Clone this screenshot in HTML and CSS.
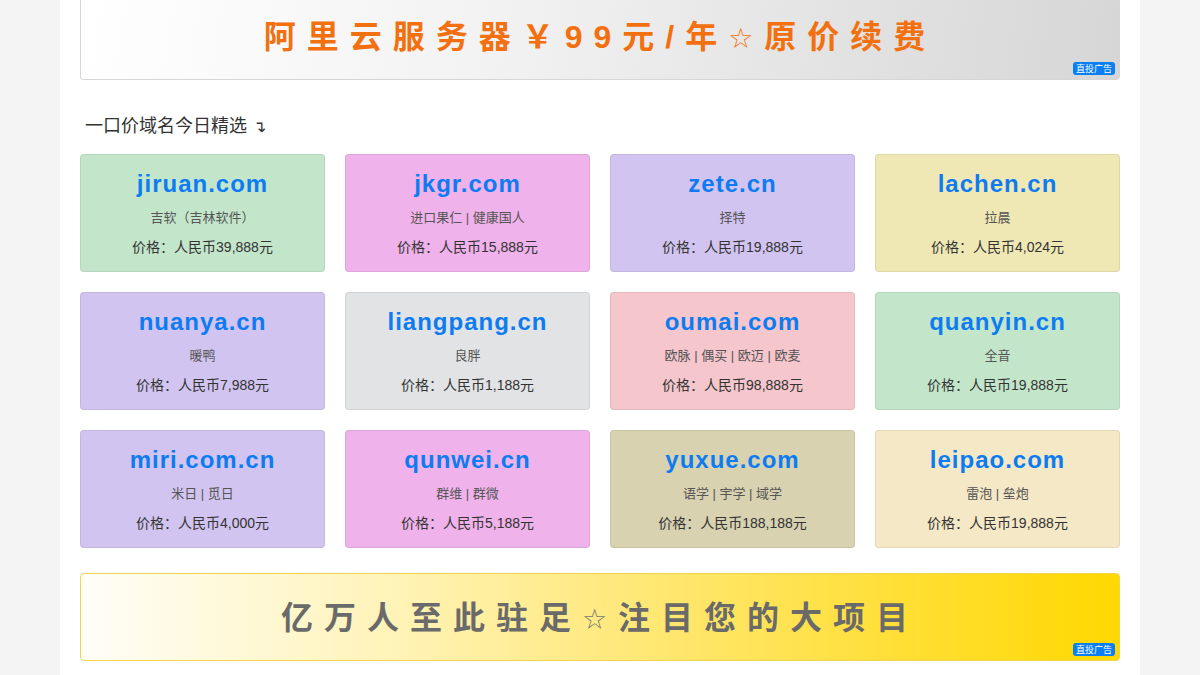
FILE: index.html
```html
<!DOCTYPE html>
<html lang="zh-CN">
<head>
<meta charset="utf-8">
<title>一口价域名今日精选</title>
<link rel="stylesheet" href="styles.css">
</head>
<body>
<div class="page">
  <div class="banner banner-top">
    <span class="banner-text">阿里云服务器￥99元/年<span class="star">☆</span>原价续费</span>
    <span class="badge">直投广告</span>
  </div>

  <h2 class="section-title">一口价域名今日精选 <span class="arrow">↴</span></h2>

  <div class="grid">
    <div class="card c-green"><div class="domain">jiruan.com</div><div class="sub">吉软（吉林软件）</div><div class="price">价格：人民币39,888元</div></div>
    <div class="card c-pink"><div class="domain">jkgr.com</div><div class="sub">进口果仁 | 健康国人</div><div class="price">价格：人民币15,888元</div></div>
    <div class="card c-lav"><div class="domain">zete.cn</div><div class="sub">择特</div><div class="price">价格：人民币19,888元</div></div>
    <div class="card c-yellow"><div class="domain">lachen.cn</div><div class="sub">拉晨</div><div class="price">价格：人民币4,024元</div></div>

    <div class="card c-lav"><div class="domain">nuanya.cn</div><div class="sub">暖鸭</div><div class="price">价格：人民币7,988元</div></div>
    <div class="card c-gray"><div class="domain">liangpang.cn</div><div class="sub">良胖</div><div class="price">价格：人民币1,188元</div></div>
    <div class="card c-rose"><div class="domain">oumai.com</div><div class="sub">欧脉 | 偶买 | 欧迈 | 欧麦</div><div class="price">价格：人民币98,888元</div></div>
    <div class="card c-green"><div class="domain">quanyin.cn</div><div class="sub">全音</div><div class="price">价格：人民币19,888元</div></div>

    <div class="card c-lav"><div class="domain">miri.com.cn</div><div class="sub">米日 | 觅日</div><div class="price">价格：人民币4,000元</div></div>
    <div class="card c-pink"><div class="domain">qunwei.cn</div><div class="sub">群维 | 群微</div><div class="price">价格：人民币5,188元</div></div>
    <div class="card c-khaki"><div class="domain">yuxue.com</div><div class="sub">语学 | 宇学 | 域学</div><div class="price">价格：人民币188,188元</div></div>
    <div class="card c-cream"><div class="domain">leipao.com</div><div class="sub">雷泡 | 垒炮</div><div class="price">价格：人民币19,888元</div></div>
  </div>

  <div class="banner banner-bottom">
    <span class="banner-text">亿万人至此驻足<span class="star">☆</span>注目您的大项目</span>
    <span class="badge">直投广告</span>
  </div>
</div>
</body>
</html>
```

FILE: styles.css
```css
html, body {
  margin: 0;
  padding: 0;
}
body {
  background: #f4f4f4;
  font-family: "Liberation Sans", "Noto Sans CJK SC", sans-serif;
  color: #333;
}
.page {
  width: 1040px;
  margin: 0 auto;
  padding: 0 20px 20px;
  background: #fff;
  min-height: 675px;
}
.banner {
  position: relative;
  display: flex;
  justify-content: center;
  align-items: center;
  box-sizing: border-box;
  border-radius: 0 0 4px 4px;
}
.banner-top {
  height: 80px;
  border: 1px solid #d6d6d6;
  border-top: 0;
  padding-bottom: 12px;
  background: linear-gradient(100deg, #ffffff 0%, #f2f2f2 40%, #d6d6d6 100%);
}
.banner-top .banner-text {
  color: #f2700f;
  font-weight: bold;
  font-size: 32px;
  letter-spacing: 11px;
  white-space: nowrap;
}
.star {
  font-weight: normal;
  font-family: "DejaVu Sans", sans-serif;
  font-size: 28px;
}
.banner-bottom {
  margin-top: 25px;
  height: 88px;
  border: 1px solid #f0d54a;
  border-radius: 4px;
  padding-bottom: 5px;
  background: linear-gradient(90deg, #fffef8 0%, #fff3b8 30%, #ffe566 60%, #ffd800 100%);
}
.banner-bottom .banner-text {
  color: #6a6a6a;
  font-weight: bold;
  font-size: 32px;
  letter-spacing: 11px;
  white-space: nowrap;
}
.banner-bottom .star {
  color: #777;
}
.badge {
  position: absolute;
  right: 4px;
  bottom: 4px;
  background: #0a7ff2;
  color: #fff;
  font-size: 9px;
  line-height: 13px;
  padding: 0 3px;
  border-radius: 3px;
  letter-spacing: 0;
  font-family: "Noto Sans CJK SC", sans-serif;
}
.section-title {
  margin: 31px 0 0;
  padding-left: 5px;
  font-size: 18px;
  line-height: 26px;
  font-weight: normal;
  color: #333;
  font-family: "Noto Sans CJK SC", sans-serif;
}
.arrow {
  font-family: "DejaVu Sans", sans-serif;
  font-size: 16px;
  margin-left: 2px;
}
.grid {
  margin-top: 14px;
  display: grid;
  grid-template-columns: repeat(4, 1fr);
  gap: 20px;
}
.card {
  box-sizing: border-box;
  height: 118px;
  border: 1px solid rgba(0, 0, 0, 0.07);
  border-radius: 4px;
  text-align: center;
  padding-top: 13px;
}
.domain {
  font-size: 24px;
  font-weight: bold;
  color: #0d7cf2;
  letter-spacing: 1px;
  line-height: 32px;
}
.sub {
  margin-top: 8px;
  font-size: 13px;
  line-height: 20px;
  color: #555;
}
.price {
  margin-top: 8px;
  font-size: 14px;
  line-height: 22px;
  color: #333;
}
.c-green { background: #c3e6cb; }
.c-pink { background: #f0b2ea; }
.c-lav { background: #d2c4f0; }
.c-yellow { background: #f0e8b4; }
.c-gray { background: #e2e3e5; }
.c-rose { background: #f5c6cc; }
.c-khaki { background: #d8d2b0; }
.c-cream { background: #f5e8c6; }
```
